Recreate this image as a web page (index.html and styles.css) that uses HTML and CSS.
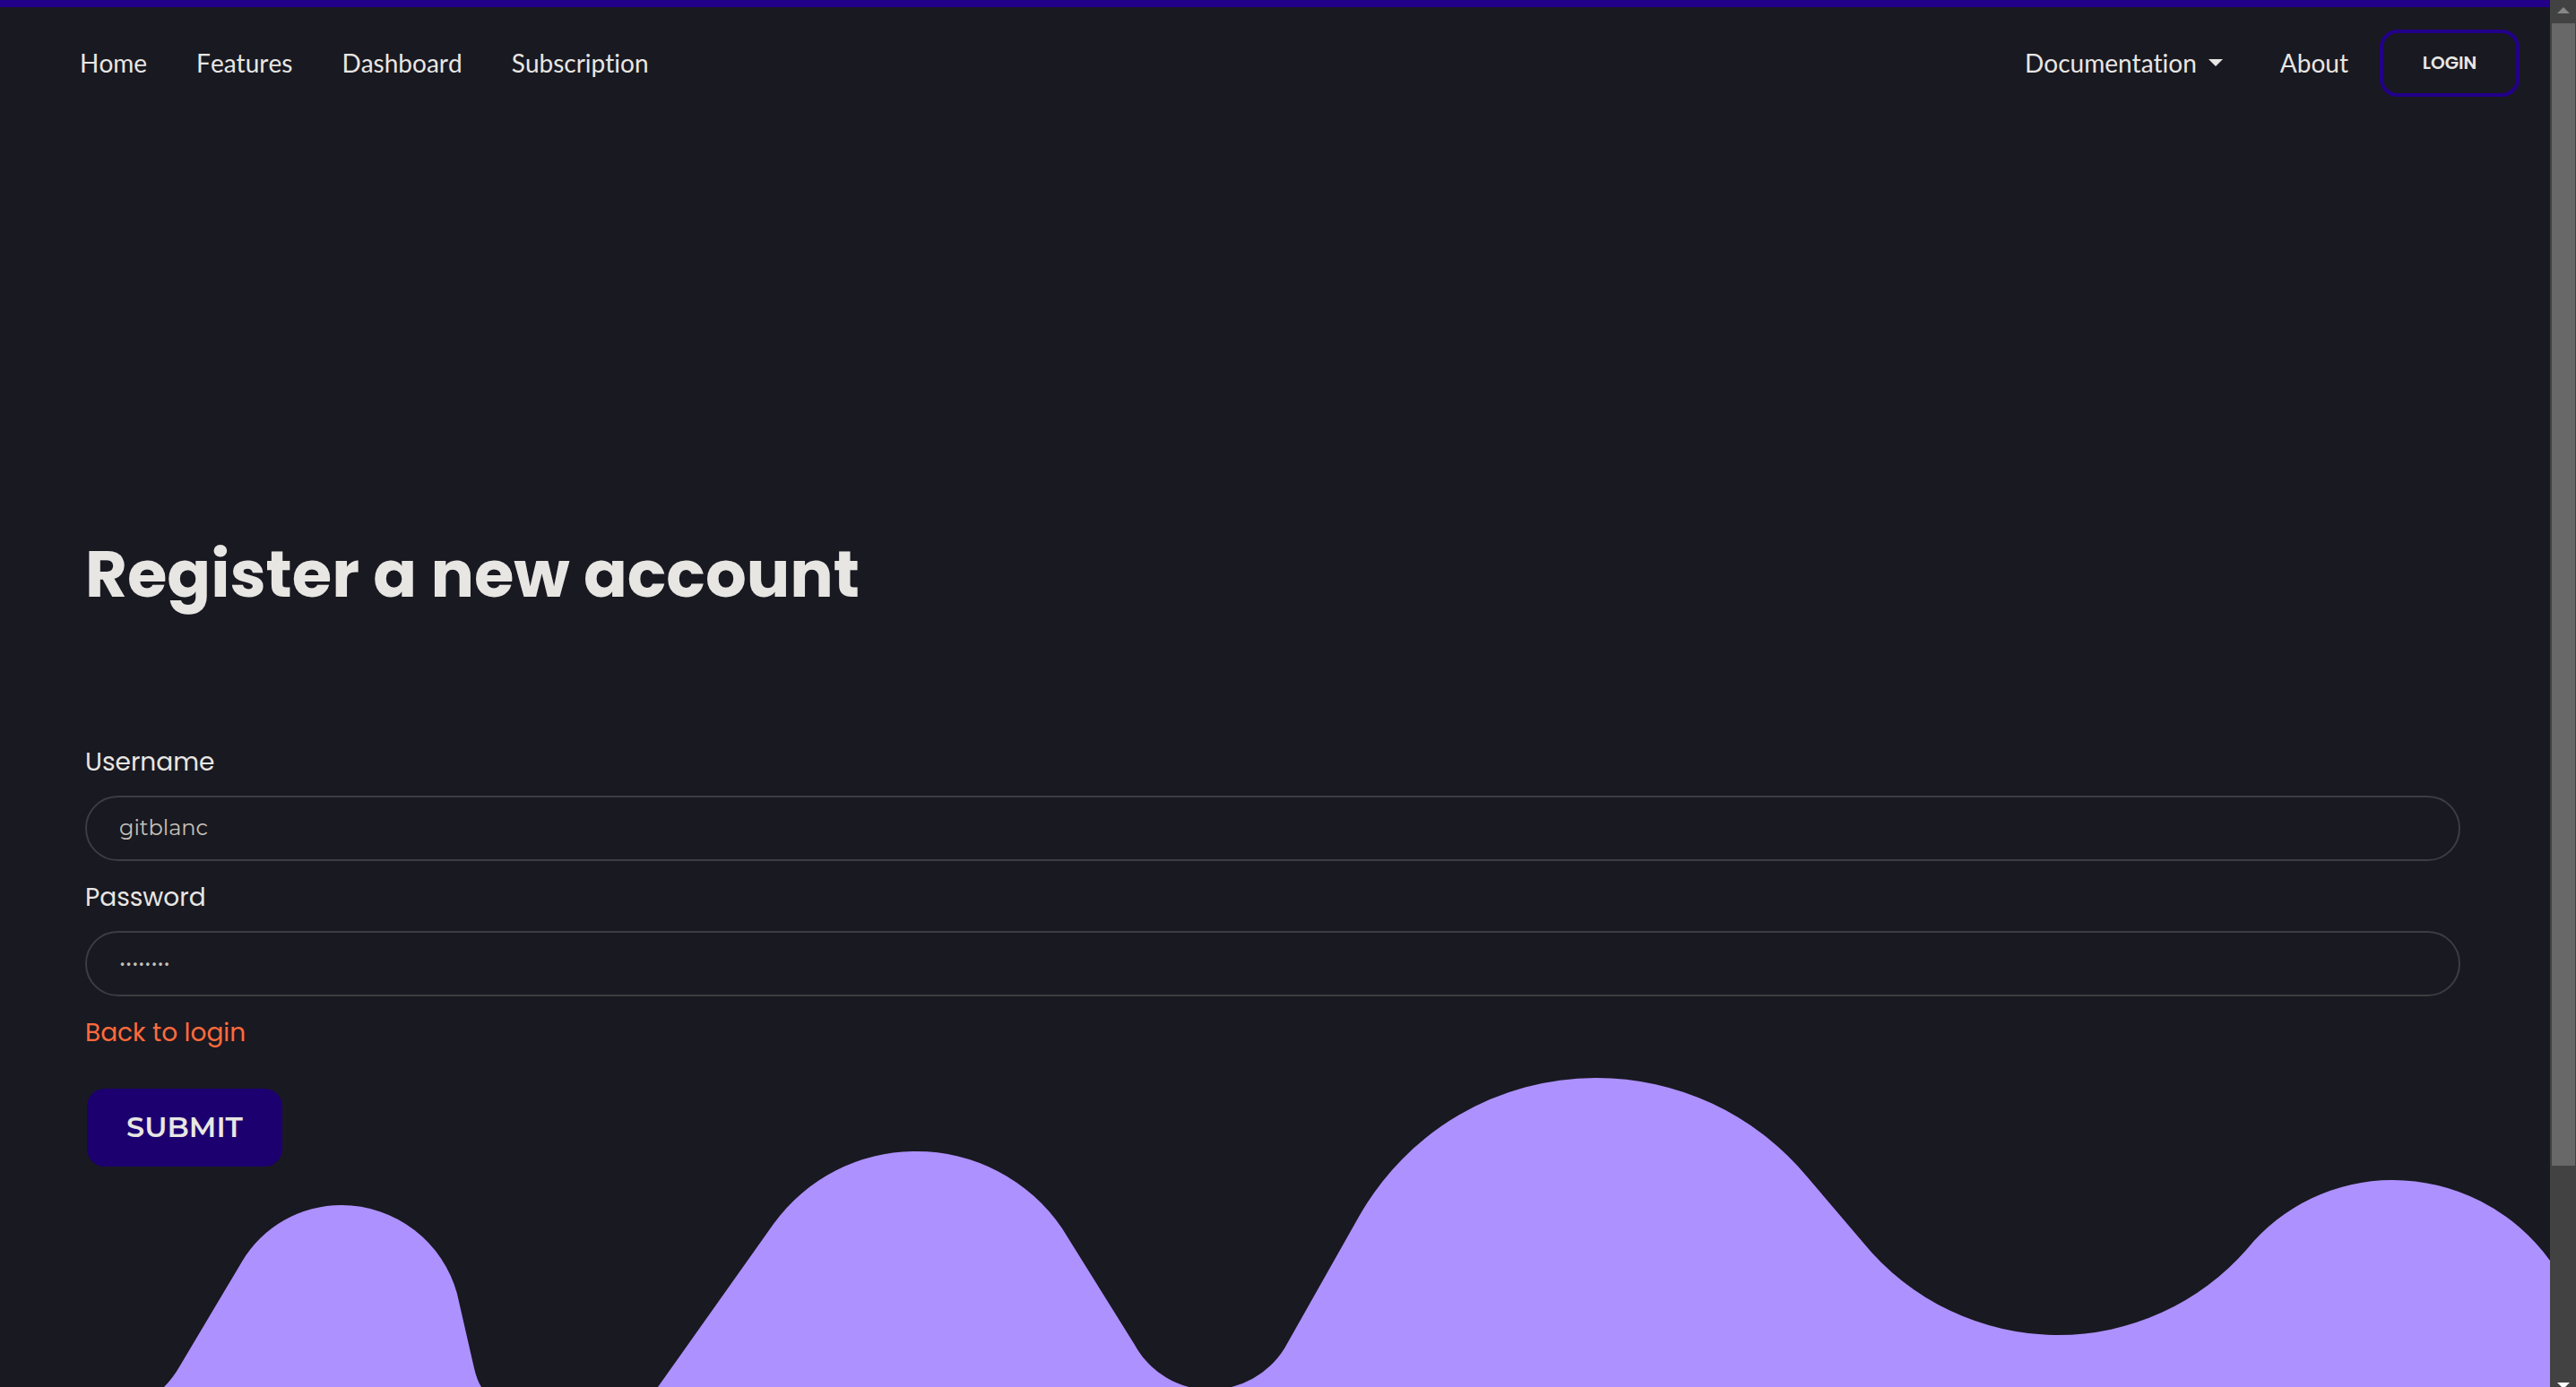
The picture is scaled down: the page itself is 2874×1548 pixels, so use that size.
FILE: index.html
```html
<!DOCTYPE html>
<html lang="en">
<head>
<meta charset="utf-8">
<title>Register a new account</title>
<link rel="stylesheet" href="styles.css">
</head>
<body>
<div class="window">
  <div class="page">
    <header class="topbar">
      <nav class="nav">
        <a href="#">Home</a>
        <a href="#">Features</a>
        <a href="#">Dashboard</a>
        <a href="#">Subscription</a>
      </nav>
      <nav class="nav nav-end">
        <a class="dropdown" href="#">Documentation
          <svg class="caret" viewBox="0 0 16 8" aria-hidden="true"><path d="M0 0H16L8 8Z"/></svg>
        </a>
        <a href="#">About</a>
        <button class="login" type="button">LOGIN</button>
      </nav>
    </header>
    <div class="stage">
      <svg class="wave" viewBox="0 0 2845 345" aria-hidden="true">
        <path d="M183 345Q193 335 201 321L270 205A129 129 0 0 1 381 142A134 134 0 0 1 510 241L529 324Q532 337 537 345V348H732L734 345L863 163A195 195 0 0 1 1021 82A196 196 0 0 1 1185 168L1266 298A96 96 0 0 0 1350 348A98 98 0 0 0 1433 302L1516 155A304 304 0 0 1 1781 0A306 306 0 0 1 2015 109L2078 183A281 281 0 0 0 2296 287A280 280 0 0 0 2507 191A209 209 0 0 1 2669 114A217 217 0 0 1 2845 204V348H181Z"/>
      </svg>
      <main class="content">
        <h1>Register a new account</h1>
        <form class="form">
          <label for="username">Username</label>
          <input id="username" type="text" placeholder="gitblanc">
          <label for="password">Password</label>
          <input id="password" type="password" placeholder="••••••••">
          <a class="back" href="#">Back to login</a>
          <button class="submit" type="button">SUBMIT</button>
        </form>
      </main>
    </div>
  </div>
  <div class="scrollbar" aria-hidden="true">
    <svg class="arrow arrow-up" viewBox="0 0 14 7"><path d="M7 0L14 7H0Z"/></svg>
    <div class="thumb"></div>
    <svg class="arrow arrow-down" viewBox="0 0 14 7"><path d="M0 0H14L7 7Z"/></svg>
  </div>
</div>
</body>
</html>
```
FILE: styles.css
```css
* { box-sizing: border-box; }

body {
  margin: 0;
  background: #191921;
  color: #e8e6e3;
  font-family: Poppins, "Open Sans", sans-serif;
  font-size: 28px;
  overflow: hidden;
}

a { color: inherit; text-decoration: none; }

.window {
  display: grid;
  grid-template-columns: 1fr 29px;
  height: 100vh;
  overflow: hidden;
}

.page {
  display: flex;
  flex-direction: column;
  min-width: 0;
  border-top: 8px solid #220088;
}

.topbar {
  display: flex;
  justify-content: space-between;
  align-items: center;
  height: 125px;
  padding: 0 34px 0 89px;
  font-family: Lato, sans-serif;
  font-kerning: none;
  font-variant-ligatures: none;
  line-height: 40px;
}

.nav { display: flex; align-items: center; gap: 55px; }
.nav a { padding-bottom: 2px; }
.nav-end { gap: 35px; }

.dropdown { display: flex; align-items: center; gap: 13px; margin-right: 29px; }
.caret { width: 16px; height: 8px; fill: currentColor; }

.login {
  width: 156px;
  height: 75px;
  padding: 0 0 2px;
  border: 4px solid #220088;
  border-radius: 20px;
  background: none;
  color: inherit;
  font: 600 20px/24px Poppins, "Open Sans", sans-serif;
}

.stage { display: grid; flex: 1; }
.wave {
  grid-area: 1 / 1;
  align-self: end;
  width: 100%;
  fill: #ad91ff;
}

.content {
  grid-area: 1 / 1;
  padding: 448px 100px 0 95px;
}

h1 {
  margin: 0 0 129px;
  font-size: 72px;
  font-weight: 700;
  line-height: 120px;
}

.form { display: flex; flex-direction: column; align-items: flex-start; }
label, .back { line-height: 42px; }
label { margin-bottom: 16px; }
.back { color: #ff6b3d; }

input {
  width: 100%;
  height: 73px;
  margin-bottom: 20px;
  padding: 0 36px 2px;
  border: 2px solid #3a3e41;
  border-radius: 37px;
  background: none;
  color: #c5c1b9;
  font: 24px/32px Montserrat, Inter, sans-serif;
}
input::placeholder { color: #c5c1b9; opacity: 1; }

.submit {
  width: 218px;
  height: 87px;
  margin: 41px 2px 0;
  padding: 0 0 2px;
  border: 0;
  border-radius: 20px;
  background: #1c0070;
  color: inherit;
  font: 600 32px/40px Montserrat, Inter, sans-serif;
}

.scrollbar {
  display: flex;
  flex-direction: column;
  align-items: center;
  background: #424242;
}
.arrow { flex: none; width: 14px; height: 7px; }
.arrow-up { margin: 8px 0 11px; fill: #868686; }
.arrow-down { margin-bottom: -2px; fill: #fff; }
.thumb { width: 26px; height: 84%; max-height: 1275px; margin-bottom: auto; background: #686868; }
```
